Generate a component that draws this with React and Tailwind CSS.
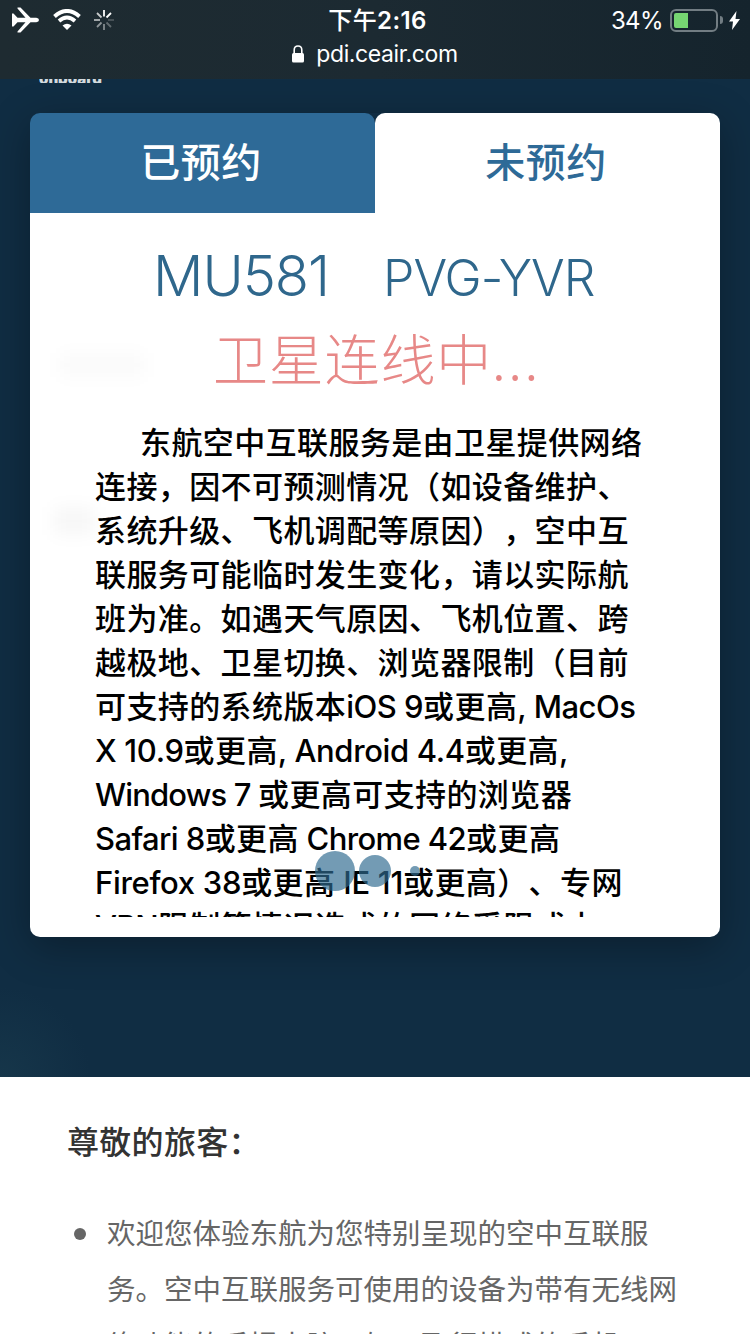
import React from "react";

// latin = spacing of the latin runs in that line
const noticeLines = [
  { text: "东航空中互联服务是由卫星提供网络", latin: "" },
  { text: "连接，因不可预测情况（如设备维护、", latin: "" },
  { text: "系统升级、飞机调配等原因），空中互", latin: "" },
  { text: "联服务可能临时发生变化，请以实际航", latin: "" },
  { text: "班为准。如遇天气原因、飞机位置、跨", latin: "" },
  { text: "越极地、卫星切换、浏览器限制（目前", latin: "" },
  { text: "可支持的系统版本iOS 9或更高, MacOs", latin: "tracking-[-0.5px]" },
  { text: "X 10.9或更高, Android 4.4或更高,", latin: "tracking-[-0.35px]" },
  { text: "Windows 7 或更高可支持的浏览器", latin: "tracking-[-0.85px]" },
  { text: "Safari 8或更高 Chrome 42或更高", latin: "tracking-[-0.6px]" },
  { text: "Firefox 38或更高 IE 11或更高）、专网", latin: "tracking-[-0.3px]" },
  { text: "VPN限制等情况造成的网络受限或中", latin: "tracking-[-0.8px]" },
];

const welcomeLines = [
  "欢迎您体验东航为您特别呈现的空中互联服",
  "务。空中互联服务可使用的设备为带有无线网",
  "络功能的手提电脑、如开飞行模式的手机、平",
];

const StatusBar = () => {
  return (
    <div className="h-[79px] shrink-0 bg-linear-to-r from-[#1e2b31] via-[#1c2a32] to-[#15242d] text-white">
      <div className="flex h-10 items-center justify-between pl-3 pr-[10px]">
        {/* airplane, wifi, spinner */}
        <div className="flex w-[219px] items-center">
          <svg className="h-[26px] w-7" viewBox="0 0 28 26" fill="white">
            <path d="M0 6.500h1.500l4 4.200h8L5.500 1.500V.500h3L18.500 10.700h5.800q2.700.4 2.700 2.300t-2.700 2.300h-5.800L8.500 25.500h-3v-1l8-9.200h-8l-4 4.200H0z" />
          </svg>
          <svg className="ml-[13px] h-[22px] w-7" viewBox="0 0 28 22" fill="none" stroke="white">
            <path d="M1.500 7.500Q14-3.500 26.500 7.500" strokeWidth="4" />
            <path d="M6 12Q14 5 22 12" strokeWidth="3.800" />
            <path d="M14 21L9.500 16.500Q14 13 18.500 16.500z" fill="white" stroke="none" />
          </svg>
          <svg className="ml-[13px] size-5" viewBox="0 0 20 20" stroke="white" strokeWidth="1.800">
            <path d="M10 0v6.500" />
            <path d="M12.500 7.500L17 3" />
            <path d="M14 10h6" opacity=".2" />
            <path d="M12.500 12.500L17 17" opacity=".3" />
            <path d="M10 14v6" opacity=".45" />
            <path d="M7.500 12.500L3 17" opacity=".5" />
            <path d="M6 10H0" opacity=".65" />
            <path d="M7.500 7.500L3 3" opacity=".75" />
          </svg>
        </div>
        <p className="ml-[3px] pt-[2px] font-['Inter','Noto_Sans_CJK_SC',sans-serif] text-[24px] font-semibold tracking-[0.4px]">
          <span className="font-medium">下午</span>2:16
        </p>
        <div className="flex w-[219px] items-center justify-end">
          <p className="pt-[2px] font-['Inter',sans-serif] text-[24px] tracking-[-0.6px]">34%</p>
          <div className="ml-[7px] h-[23px] w-12 rounded-md border-2 border-[#727d83] p-[2px]">
            <div className="h-[15px] w-3.5 rounded-l-xs bg-[#76d672]"></div>
          </div>
          <div className="ml-[2px] h-2 w-[3px] rounded-r-full bg-[#727d83]"></div>
          <svg className="ml-[6px] h-[19px] w-[11px]" viewBox="0 0 11 19" fill="white">
            <path d="M7.500 0L0 10.500h4L3 19l8-11H6.500z" />
          </svg>
        </div>
      </div>
      <div className="flex h-7 items-center justify-center gap-3">
        <svg className="h-[18px] w-3" viewBox="0 0 12 18" fill="white">
          <rect y="8" width="12" height="9.500" rx="1.500" />
          <path d="M2.200 9V5Q2.200 1 6 1t3.800 4v4" fill="none" stroke="white" strokeWidth="1.600" />
        </svg>
        <p className="font-['Inter',sans-serif] text-[23px] tracking-[-0.4px]">pdi.ceair.com</p>
      </div>
    </div>
  );
};

// latin runs are set lighter and tighter than the chinese around them
const MixedText = ({ text, latin }) => {
  return text.split(/([ -~]+)/).map((part, i) => (
    <span key={i} className={i % 2 ? `font-[450] ${latin}` : "tracking-[0.4px]"}>
      {part}
    </span>
  ));
};

const FlightCard = () => {
  return (
    <div className="relative h-[824px] rounded-[10px] shadow-[0_10px_40px_rgba(0,0,0,0.3)]">
      {/* tabs */}
      <div className="flex h-[100px] text-[40px] font-medium leading-[94px] tracking-[0.5px]">
        <div className="w-1/2 rounded-t-[10px] bg-[#2e6a97] pr-[3px] text-center text-white">已预约</div>
        <div className="w-1/2 rounded-t-[10px] bg-white pr-[3px] text-center text-[#2e6a97]">未预约</div>
      </div>
      <div className="h-[724px] rounded-b-[10px] bg-white">
        {/* flight number and route */}
        <div className="flex h-[108px] items-baseline pl-[123px] pt-[23px] font-['Inter',sans-serif] font-light leading-[80px] text-[#2f678c]">
          <p className="w-[230px] text-[56px] tracking-[-1px]">MU581</p>
          <p className="text-[50px] tracking-[-0.9px]">PVG-YVR</p>
        </div>
        <p className="-mt-[5px] pl-[183px] text-[55px] font-light leading-[80px] tracking-[0.8px] text-[#e78887]">
          卫星连线中<span className="tracking-[2.500px]">...</span>
        </p>
        <div className="ml-[65px] mt-[25px] h-[496px] overflow-hidden whitespace-pre font-['Inter','Noto_Sans_CJK_SC',sans-serif] text-[31px] font-medium leading-[43px] text-black [text-spacing-trim:space-all]">
          {noticeLines.map((line, i) => (
            <p key={line.text} className={i === 0 ? "h-11 pl-[45px]" : "h-11"}>
              <MixedText text={line.text} latin={line.latin} />
            </p>
          ))}
        </div>
      </div>
      {/* loading dots over the text */}
      <div className="absolute left-[285px] top-[738px] flex items-center">
        <div className="size-10 rounded-full bg-[#2e6a8f]/67"></div>
        <div className="ml-1 size-8 rounded-full bg-[#2e6a8f]/67"></div>
        <div className="ml-[19px] size-2.5 rounded-full bg-[#2e6a8f]/67"></div>
      </div>
      <div className="absolute left-[30px] top-[240px] h-6 w-[84px] bg-black/2 blur-[8px]"></div>
      <div className="absolute left-[24px] top-[394px] h-7 w-10 bg-black/3 blur-[8px]"></div>
    </div>
  );
};

const App = () => {
  return (
    <div className="flex h-[1334px] w-[750px] flex-col overflow-hidden bg-white font-['Noto_Sans_CJK_SC',sans-serif]">
      <StatusBar />
      <div className="h-[998px] shrink-0 bg-[#102d43] bg-[radial-gradient(circle_at_0%_100%,#16364a_0px,#102d43_90px)] px-[30px]">
        <div className="ml-[9px] h-[34px]">
          <div className="flex h-1 items-end overflow-hidden">
            <p className="font-['Inter',sans-serif] text-[15px] font-black leading-[8px] text-[#d3dade]">onboard</p>
          </div>
        </div>
        <FlightCard />
      </div>
      <div className="h-[257px] overflow-hidden px-[67px] pt-[39px]">
        <p className="text-[32px] font-medium leading-[48px] tracking-[0.3px] text-[#333]">尊敬的旅客：</p>
        <div className="mt-[40px] flex text-[28.500px] leading-[56px] text-[#666]">
          <div className="ml-[7px] mt-[24px] size-3 shrink-0 rounded-full bg-[#666]"></div>
          <div className="ml-[21px] whitespace-nowrap">
            {welcomeLines.map((line) => (
              <p key={line}>{line}</p>
            ))}
          </div>
        </div>
      </div>
    </div>
  );
};

export default App;
